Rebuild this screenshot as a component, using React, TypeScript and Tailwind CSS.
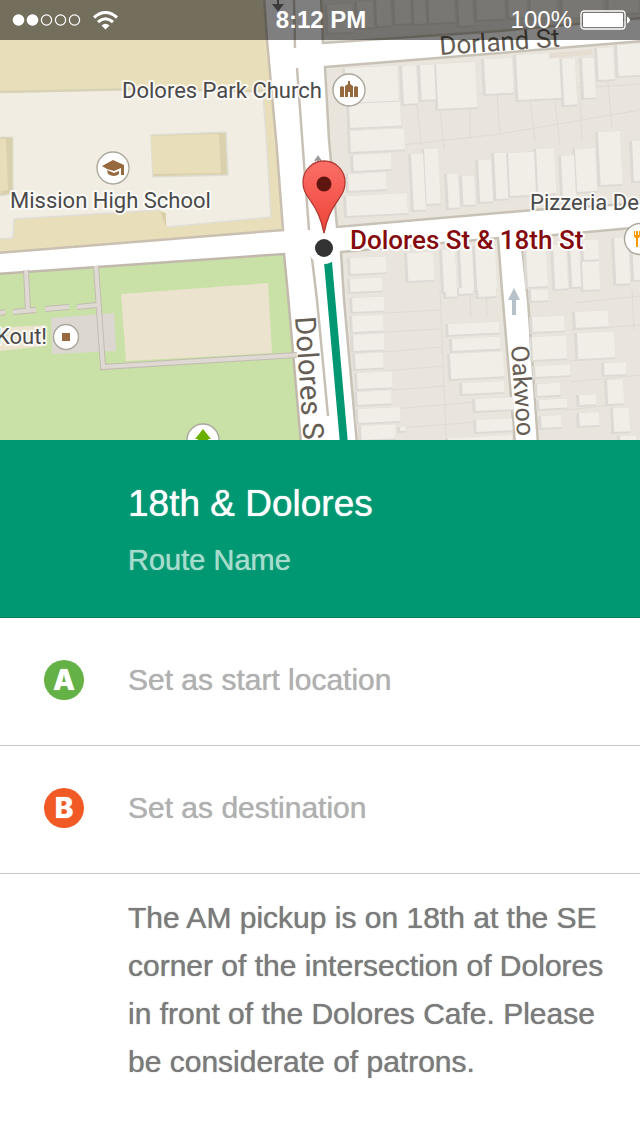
import React from "react";

type Box = [x: number, y: number, w: number, h: number];

const buildings: Box[] = [
  [327, 5, 25, 28], [357, 2, 16, 26], [376, 0, 14, 26], [394, -4, 16, 28], [413, -4, 12, 28],
  [428, -4, 26, 27], [458, 0, 14, 26], [476, -6, 28, 26], [508, -6, 18, 24], [530, -8, 26, 26], [562, -6, 40, 24], [608, -8, 30, 22],
  [345, 68, 52, 35], [402, 66, 14, 38], [420, 65, 14, 35], [436, 64, 39, 45], [484, 59, 28, 35], [516, 55, 43, 45],
  [562, 59, 13, 46], [582, 58, 12, 40], [597, 48, 16, 32], [617, 45, 26, 31],
  [349, 104, 51, 24], [350, 131, 54, 21], [353, 155, 38, 16], [348, 174, 38, 17], [346, 196, 61, 20],
  [411, 154, 12, 56], [424, 149, 14, 55], [447, 174, 11, 34], [462, 176, 12, 29], [478, 160, 13, 42],
  [494, 153, 12, 46], [508, 153, 26, 43], [536, 149, 18, 45], [561, 156, 13, 42], [575, 149, 20, 43],
  [598, 132, 22, 53], [632, 141, 14, 40],
  [350, 258, 36, 16], [350, 279, 32, 13], [407, 253, 26, 28], [442, 250, 13, 42], [460, 249, 12, 42], [475, 246, 20, 44],
  [352, 298, 32, 14], [352, 316, 31, 16], [353, 335, 31, 16], [355, 354, 28, 15], [357, 373, 35, 16],
  [357, 392, 34, 13], [358, 409, 42, 14], [361, 426, 34, 14], [400, 427, 6, 4],
  [448, 324, 51, 11], [452, 339, 48, 12], [450, 354, 53, 25], [462, 383, 42, 11], [475, 399, 38, 12], [476, 420, 36, 12],
  [448, 438, 64, 10], [446, 290, 11, 7], [459, 288, 14, 6], [478, 288, 18, 9],
  [526, 247, 20, 40], [553, 245, 13, 44], [570, 243, 9, 44], [583, 240, 15, 20], [582, 262, 17, 28], [614, 238, 14, 46], [632, 238, 12, 42],
  [531, 290, 17, 11], [532, 317, 32, 15], [532, 337, 34, 23], [575, 312, 33, 16], [577, 333, 37, 26],
  [535, 366, 35, 11], [537, 384, 23, 12], [539, 400, 28, 9], [541, 416, 20, 12], [579, 395, 17, 10],
  [579, 413, 20, 13], [604, 363, 22, 12], [607, 380, 16, 24], [613, 408, 16, 24], [620, 436, 16, 10],
];

const slant = ([x, y, w, h]: Box) =>
  `M${x} ${y}l${w} ${-w * 0.05}l${h * 0.05} ${h}l${-w} ${w * 0.05}z`;

function Poi({ x, y, r = 16, children }: { x: number; y: number; r?: number; children: React.ReactNode }) {
  return (
    <g transform={`translate(${x} ${y})`}>
      <circle r={r} fill="#fff" stroke="#aaa79c" strokeWidth="1.4" />
      {children}
    </g>
  );
}

function StreetMap() {
  return (
    <svg
      viewBox="0 0 640 440"
      preserveAspectRatio="xMidYMid slice"
      className="block h-full w-full"
      role="img"
      aria-label="Map of Dolores St and 18th St"
    >
      <defs>
        <linearGradient id="pin" x1="0" y1="0" x2="0" y2="1">
          <stop offset="0" stopColor="#fb6f67" />
          <stop offset="1" stopColor="#ee4338" />
        </linearGradient>
      </defs>
      <rect width="640" height="440" fill="#fff" />

      {/* school block */}
      <path d="M-4-4H264L267 40L277 150L283 230L-4 253z" fill="#e8deba" stroke="#c9c0b1" strokeWidth="2.5" />
      <path d="M0 93L140 90L263 92L267 150L271 217L167 227L166 222L160 210L14 219L13 238L0 239z" fill="#f1ede2" />
      <path d="M0 92L140 89L263 91" fill="none" stroke="#d8d2b7" strokeWidth="2.5" />
      <path d="M263 94L267 150L271 217L167 227M160 210L14 219L13 238L0 239" fill="none" stroke="#e0ded6" strokeWidth="1.5" />
      <path d="M160 211L166 226L166 213z" fill="#d9d0a9" />
      <path d="M0 137H13V194L0 196z" fill="#d9d1ad" stroke="#dfddd3" />
      <path d="M0 139H6L8 190L0 191z" fill="#e8deba" />
      <path d="M151 135L226 132L228 175L153 177z" fill="#d9d1ad" stroke="#dfddd3" strokeWidth="1.5" />
      <path d="M151 136L219 134L221 173L153 174z" fill="#e8deba" />

      {/* park */}
      <path d="M-4 274L284 254L288 295L301 444H-4z" fill="#c9e0a7" stroke="#c2b9ad" strokeWidth="2.5" />
      <path d="M121 294L268 283L272 353L126 361z" fill="#ebe3cd" />
      <path d="M0 328L45 325V346L0 351z" fill="#ebe3cd" />
      <path d="M51 318L114 313L116 351L52 354z" fill="#dcd7d0" />
      <g fill="none" strokeLinejoin="miter">
        <path
          d="M26 270L28 311M0 313L5 312M13 312L36 310M45 309L69 307M77 307L97 305M96 266L103 367L297 355"
          stroke="#c3bcb1" strokeWidth="6"
        />
        <path
          d="M26 270L28 311M0 313L5 312M13 312L36 310M45 309L69 307M77 307L97 305M96 266L103 367L297 355"
          stroke="#dfd9d4" strokeWidth="4"
        />
      </g>

      {/* residential blocks */}
      <g fill="#e9e4dc" stroke="#c7c2b5" strokeWidth="2.5">
        <path d="M321-4L323 43L500 31L644 18V-4z" />
        <path d="M325 67L500 53L644 41V203L533 210L337 227L329 140z" />
        <path d="M341 252L498 238L502 290L515 444H357L344 300z" />
        <path d="M521 238L644 227V444H538L528 300z" />
      </g>
      <path
        d="M400 108L402 140M417 104L421 145M440 109L444 150M470 109L470 139M497 93L500 135M530 100L535 142M555 102L560 145M580 98L582 140M608 82L612 128M402 145L500 134L640 110M385 100L640 84M384 313L440 310M384 332L440 329M384 352L442 347M384 371L444 366M392 390L446 386M392 409L475 402M400 428L476 422M440 290L446 436M470 290L471 318M486 290L487 316M574 303L640 296M570 330L640 325M570 361L604 358M570 382L640 375M565 410L615 405M604 361L618 440M632 290L634 330"
        fill="none" stroke="#e0dbd3" strokeWidth="1"
      />
      <g fill="#dddad5">
        {buildings.map((b, i) => (
          <path key={i} d={slant([b[0] - 3, b[1], b[2] + 3, b[3] + 2])} />
        ))}
      </g>
      <g fill="#f1eee7">
        {buildings.map((b, i) => (
          <path key={i} d={slant(b)} />
        ))}
      </g>
      <path d="M549 56L592 52" stroke="#e5ddd2" strokeWidth="5" />

      {/* street medians */}
      <path
        d="M294 0L295 48M297 68L303 150L309 230M311 250L317 300L328 416"
        fill="none" stroke="#c8c0b5" strokeWidth="2.5"
      />
      <path d="M278 0V7M274 5H282L278 10z" fill="#777" stroke="#777" strokeWidth="2" />
      <path d="M318 162V157M315 161L318 157L321 161" fill="none" stroke="#999" strokeWidth="2" />
      <path d="M514 288L520 300H516V315H512V300H508z" fill="#b6c1ca" />

      {/* route */}
      <path d="M327 248L344 444" stroke="#fff" strokeWidth="16" />
      <path d="M328 262L344 444" stroke="#009872" strokeWidth="8" />
      <circle cx="324" cy="248" r="16" fill="#fff" />
      <circle cx="324" cy="248" r="9" fill="#333" />
      <path
        d="M324 233C321 218 317 210 310 200C305 193 303 189 303 182A21 21 0 0 1 345 182C345 189 343 193 338 200C331 210 327 218 324 233z"
        fill="url(#pin)" stroke="#b23a32" strokeWidth="1.3"
      />
      <circle cx="324" cy="184" r="7.5" fill="#5e140f" />

      {/* points of interest */}
      <Poi x={349} y={90}>
        <path
          d="M-9-3L-7-4L-5-3V7H-9zM5-3L7-4L9-3V7H5zM-4-4L-1-6V-9H1V-6L4-4V7H1V2H-1V7H-4z"
          fill="#96693f"
        />
      </Poi>
      <Poi x={113} y={168}>
        <path d="M-11-2L0-8L11-3V7H8V0L1 3L-6 1zM-6 2L1 5L6 3V6Q1 10-5 6z" fill="#96693f" />
      </Poi>
      <Poi x={66} y={337} r={12.5}>
        <path d="M-4-4H4V4H-4z" fill="#96693f" />
      </Poi>
      <Poi x={203} y={440}>
        <path d="M0-11L8-1H5L9 6H-9L-5-1H-8z" fill="#69b000" />
      </Poi>
      <Poi x={640} y={239} r={15.5}>
        <path d="M-6-8V-3Q-6-1-4-1V8H-2V-1Q0-1 0-3V-8H-1V-4H-2V-8H-4V-4H-5V-8z" fill="#f90" />
      </Poi>

      {/* labels */}
      <g
        fontFamily="Roboto, 'Liberation Sans', sans-serif"
        fontSize="22"
        fill="#4a4a4a"
        stroke="#fff"
        strokeOpacity="0.75"
        strokeWidth="4"
        strokeLinejoin="round"
        paintOrder="stroke"
      >
        <text x="122" y="98">Dolores Park Church</text>
        <text x="10" y="208">Mission High School</text>
        <text x="530" y="210">Pizzeria De</text>
        <text x="47" y="344" textAnchor="end">Kout!</text>
        <g fill="#665e54" strokeWidth="2">
          <text transform="translate(440 55) rotate(-4)" fontSize="26" strokeOpacity="0.3">Dorland St</text>
          <text transform="translate(295 317) rotate(86)" fontSize="29">Dolores S</text>
          <text transform="translate(511 346) rotate(86)" fontSize="25">Oakwoo</text>
        </g>
        <text x="350" y="249" fontSize="26" fontWeight="500" fill="#850a0d" strokeOpacity="1">
          Dolores St &amp; 18th St
        </text>
      </g>
    </svg>
  );
}

function StatusBar() {
  return (
    <div className="absolute inset-x-0 top-0 grid h-10 grid-cols-[1fr_auto_1fr] items-center bg-black/50 pr-2.5 pl-3 text-2xl text-white">
      <div className="flex items-center gap-3">
        <svg width="69" height="14" viewBox="0 0 69 14" aria-label="Signal: 2 of 5">
          {[0, 1, 2, 3, 4].map((n) => (
            <circle
              key={n}
              cx={6.5 + n * 14}
              cy="7"
              r={n < 2 ? 5.8 : 5.1}
              fill={n < 2 ? "#fff" : "none"}
              stroke={n < 2 ? "none" : "#fff"}
              strokeWidth="1.2"
            />
          ))}
        </svg>
        <svg width="25" height="19" viewBox="0 0 25 19" fill="none" stroke="#fff" aria-label="Wi-Fi">
          <path d="M1 6.5Q12.5-3.5 24 6.5M5 11Q12.5 4.5 20 11" strokeWidth="3" />
          <path d="M8.5 14.5Q12.5 11 16.5 14.5L12.5 18.5z" fill="#fff" stroke="none" />
        </svg>
      </div>
      <div className="text-center font-bold">8:12 PM</div>
      <div className="flex items-center justify-end gap-2">
        <span>100%</span>
        <svg width="50" height="20" viewBox="0 0 50 20" aria-label="Battery full">
          <rect x="1" y="1" width="44" height="18" rx="3" fill="none" stroke="#fff" strokeWidth="1.3" />
          <rect x="3" y="3" width="40" height="14" rx="1" fill="#fff" />
          <path d="M47 6.5Q50 8 50 10T47 13.5z" fill="#fff" />
        </svg>
      </div>
    </div>
  );
}

function Badge({ letter, className }: { letter: string; className: string }) {
  return (
    <span
      aria-hidden="true"
      className={`flex size-10 items-center justify-center rounded-full font-[Inter,sans-serif] text-[28px] leading-10 font-extrabold text-white ${className}`}
    >
      {letter}
    </span>
  );
}

function ActionRow({ letter, color, label }: { letter: string; color: string; label: string }) {
  return (
    <button
      type="button"
      className="flex h-32 w-full items-center border-b border-[#c8c8c8] bg-white pb-1 text-left text-[30px] text-[#b0b0b0] [text-shadow:0_0_1px_currentColor]"
    >
      <span className="flex w-32 shrink-0 justify-center">
        <Badge letter={letter} className={color} />
      </span>
      {label}
    </button>
  );
}

export default function App() {
  return (
    <main className="min-h-screen bg-white font-['Liberation_Sans',Arial,sans-serif]">
      <div className="relative h-[440px] overflow-hidden">
        <StreetMap />
        <StatusBar />
      </div>
      <header className="border-b border-[#00805f] bg-[#009872] pt-10 pr-6 pb-8 pl-32">
        <h1 className="text-[37px] leading-[48px] text-white [text-shadow:0_0_1px_currentColor]">18th &amp; Dolores</h1>
        <p className="pt-2 text-[29px] leading-[49px] text-[#a6dccb] [text-shadow:0_0_1px_currentColor]">Route Name</p>
      </header>
      <ActionRow letter="A" color="bg-[#64b145]" label="Set as start location" />
      <ActionRow letter="B" color="bg-[#f15a24]" label="Set as destination" />
      <p className="pt-5 pr-6 pb-12 pl-32 text-[30px] leading-[48px] text-[#7b7b7b] [text-shadow:0_0_1px_currentColor]">
        The AM pickup is on 18th at the SE corner of the intersection of Dolores in front of the Dolores Cafe. Please be
        considerate of patrons.
      </p>
    </main>
  );
}
